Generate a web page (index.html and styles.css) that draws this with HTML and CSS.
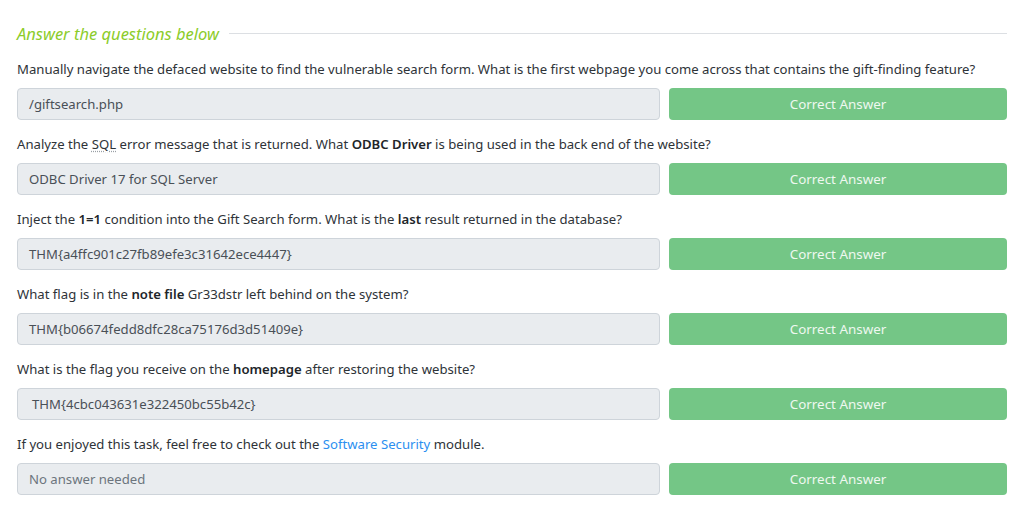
FILE: index.html
```html
<!DOCTYPE html>
<html>
<head>
<meta charset="utf-8">
<link rel="stylesheet" href="styles.css">
</head>
<body>
<div class="wrap">
  <div class="heading"><span class="heading-text">Answer the questions below</span><span class="heading-line"></span></div>

  <div class="q">
    <p class="q-text">Manually navigate the defaced website to find the vulnerable search form. What is the first webpage you come across that contains the gift-finding feature?</p>
    <div class="q-row"><div class="answer">/giftsearch.php</div><div class="btn">Correct Answer</div></div>
  </div>

  <div class="q">
    <p class="q-text">Analyze the <abbr class="abbr">SQL</abbr> error message that is returned. What <b>ODBC Driver</b> is being used in the back end of the website?</p>
    <div class="q-row"><div class="answer">ODBC Driver 17 for SQL Server</div><div class="btn">Correct Answer</div></div>
  </div>

  <div class="q">
    <p class="q-text">Inject the <b>1=1</b> condition into the Gift Search form. What is the <b>last</b> result returned in the database?</p>
    <div class="q-row"><div class="answer">THM{a4ffc901c27fb89efe3c31642ece4447}</div><div class="btn">Correct Answer</div></div>
  </div>

  <div class="q">
    <p class="q-text">What flag is in the <b>note file</b> Gr33dstr left behind on the system?</p>
    <div class="q-row"><div class="answer">THM{b06674fedd8dfc28ca75176d3d51409e}</div><div class="btn">Correct Answer</div></div>
  </div>

  <div class="q">
    <p class="q-text">What is the flag you receive on the <b>homepage</b> after restoring the website?</p>
    <div class="q-row"><div class="answer indent">THM{4cbc043631e322450bc55b42c}</div><div class="btn">Correct Answer</div></div>
  </div>

  <div class="q">
    <p class="q-text">If you enjoyed this task, feel free to check out the <a class="link" href="#">Software Security</a> module.</p>
    <div class="q-row"><div class="answer placeholder">No answer needed</div><div class="btn">Correct Answer</div></div>
  </div>
</div>
</body>
</html>
```

FILE: styles.css
```css
html, body {
  margin: 0;
  padding: 0;
  background: #ffffff;
}
body {
  font-family: "Noto Sans", "Open Sans", sans-serif;
  font-size: 13.15px;
  color: #2e3338;
}
.wrap {
  padding: 21px 17px 0 17px;
}
.heading {
  display: flex;
  align-items: center;
  height: 24px;
  margin-bottom: 14px;
}
.heading-text {
  font-style: italic;
  font-weight: 400;
  color: #8ccc2a;
  font-size: 16.5px;
  white-space: nowrap;
}
.heading-line {
  flex: 1;
  height: 1px;
  background: #dcdfe3;
  margin-left: 10px;
}
.q {
  margin-bottom: 14px;
}
.q-text {
  margin: 0 0 8px 0;
  line-height: 21px;
  white-space: nowrap;
}
.q-text b {
  font-weight: 600;
  color: #212529;
}
.abbr {
  text-decoration: underline dotted;
  text-decoration-color: #9aa0a6;
  text-underline-offset: 2px;
}
.link {
  color: #2c8ff0;
  text-decoration: none;
}
.q-row {
  display: flex;
  gap: 9px;
}
.answer {
  flex: 1;
  height: 32px;
  box-sizing: border-box;
  background: #e9ecef;
  border: 1px solid #ced4da;
  border-radius: 4px;
  padding: 0 11px;
  display: flex;
  align-items: center;
  color: #495057;
}
.answer.indent {
  padding-left: 14px;
}
.answer.placeholder {
  color: #6c757d;
}
.btn {
  width: 338px;
  height: 32px;
  box-sizing: border-box;
  background: #74c686;
  border-radius: 4px;
  color: #eef8f0;
  display: flex;
  align-items: center;
  justify-content: center;
  font-size: 13.4px;
}
```
